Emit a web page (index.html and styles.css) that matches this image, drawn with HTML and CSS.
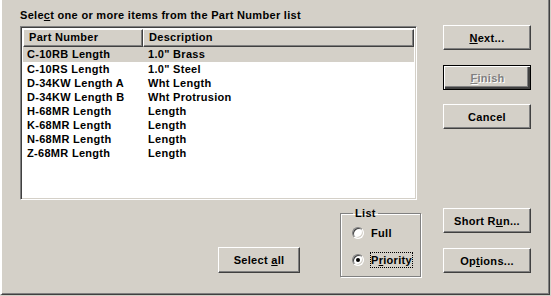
FILE: index.html
```html
<!DOCTYPE html>
<html lang="en">

<head>
    <meta charset="UTF-8">
    <title>Select Part Number</title>
    <link rel="stylesheet" href="styles.css">
</head>

<body>
    <div class="dialog">
        <div class="main">
            <p class="prompt">Sele<u>c</u>t one or more items from the Part Number list</p>
            <div class="listbox">
                <div class="head">
                    <span class="col1">Part Number</span>
                    <span class="col2">Description</span>
                </div>
                <ul class="rows">
                    <li class="sel"><span class="col1">C-10RB Length</span><span class="col2">1.0" Brass</span></li>
                    <li><span class="col1">C-10RS Length</span><span class="col2">1.0" Steel</span></li>
                    <li><span class="col1">D-34KW Length A</span><span class="col2">Wht Length</span></li>
                    <li><span class="col1">D-34KW Length B</span><span class="col2">Wht Protrusion</span></li>
                    <li><span class="col1">H-68MR Length</span><span class="col2">Length</span></li>
                    <li><span class="col1">K-68MR Length</span><span class="col2">Length</span></li>
                    <li><span class="col1">N-68MR Length</span><span class="col2">Length</span></li>
                    <li><span class="col1">Z-68MR Length</span><span class="col2">Length</span></li>
                </ul>
            </div>
            <div class="bottom">
                <button class="btn selall">Select <u>a</u>ll</button>
                <fieldset class="group">
                    <legend>List</legend>
                    <label class="radio"><span class="dot"></span>Full</label>
                    <label class="radio"><span class="dot on"></span><span class="focus">P<u>r</u>iority</span></label>
                </fieldset>
            </div>
        </div>
        <div class="side">
            <button class="btn"><u>N</u>ext...</button>
            <button class="btn def" disabled><u>F</u>inish</button>
            <button class="btn">Cancel</button>
            <button class="btn run">Short R<u>u</u>n...</button>
            <button class="btn">Op<u>t</u>ions...</button>
        </div>
    </div>
</body>

</html>
```

FILE: styles.css
```css
* {
    margin: 0;
    padding: 0;
    box-sizing: border-box;
}

body {
    background-color: #d4d0c8;
    font-family: "Liberation Sans", Arial, sans-serif;
    font-size: 11px;
    font-weight: bold;
    letter-spacing: 0.3px;
    color: #000;
}

.dialog {
    display: flex;
    width: 550px;
    height: 295px;
    border-left: 2px solid #fff;
    border-right: 1px solid #404040;
    border-bottom: 1px solid #404040;
    box-shadow: inset -1px -1px #808080;
    padding: 9px 0 0 18px;
}

u {
    text-decoration: underline;
    text-underline-offset: 1px;
}

.main {
    width: 402px;
}

.prompt {
    height: 17px;
    line-height: 13px;
}

.listbox {
    width: 397px;
    height: 174px;
    background: #fff;
    border: 1px solid;
    border-color: #808080 #fff #fff #808080;
    box-shadow: inset 1px 1px #404040, inset -1px -1px #d4d0c8;
    padding: 2px;
}

.head {
    display: flex;
    height: 18px;
    background: #d4d0c8;
}

.head span {
    line-height: 15px;
    padding-left: 5px;
    border: 1px solid;
    border-color: #fff #404040 #404040 #fff;
    box-shadow: inset -1px -1px #808080;
}

.head .col1 {
    width: 120px;
}

.head .col2 {
    flex: 1;
}

.rows {
    list-style: none;
}

.rows li {
    display: flex;
    height: 14px;
    line-height: 14px;
    padding-left: 4px;
}

.rows li.sel {
    background: #d4d0c8;
    height: 15px;
    line-height: 15px;
}

.rows .col1 {
    width: 121px;
}

.bottom {
    display: flex;
    align-items: flex-end;
    padding: 7px 0 0 198px;
}

.btn {
    display: block;
    width: 88px;
    height: 25px;
    background: #d4d0c8;
    border: 1px solid;
    border-color: #fff #404040 #404040 #fff;
    box-shadow: inset -1px -1px #808080;
    font: inherit;
    letter-spacing: inherit;
    color: #000;
}

.btn.selall {
    width: 82px;
    height: 26px;
    margin-bottom: 4px;
}

.btn.def {
    outline: 1px solid #000;
    outline-offset: -1px;
    border-width: 2px 1px 1px 2px;
    box-shadow: inset -2px -2px #404040, inset -3px -3px #808080;
    color: #808080;
    text-shadow: 1px 1px #fff;
}

.group {
    width: 81px;
    height: 70px;
    margin-left: 40px;
    border: 1px solid #808080;
    box-shadow: 1px 1px #fff, inset 1px 1px #fff;
    padding: 4px 0 0 11px;
}

.group legend {
    padding: 0 2px;
    margin-left: 1px;
    line-height: 12px;
}

.radio {
    display: flex;
    align-items: center;
    height: 20px;
    margin-bottom: 7px;
}

.dot {
    position: relative;
    width: 12px;
    height: 12px;
    margin-right: 7px;
    border-radius: 50%;
    background: #fff;
    border: 1px solid;
    border-color: #808080 #fff #fff #808080;
    box-shadow: inset 1px 1px #404040, inset -1px -1px #d4d0c8;
}

.dot.on::after {
    content: "";
    position: absolute;
    left: 3px;
    top: 3px;
    width: 4px;
    height: 4px;
    border-radius: 50%;
    background: #000;
}

.focus {
    outline: 1px dotted #000;
    padding: 1px 0;
}

.side {
    display: flex;
    flex-direction: column;
    gap: 15px;
    padding: 16px 0 0 21px;
}

.side .btn:nth-child(3) {
    margin-top: -1px;
}

.side .run {
    margin-top: 64px;
}
```
